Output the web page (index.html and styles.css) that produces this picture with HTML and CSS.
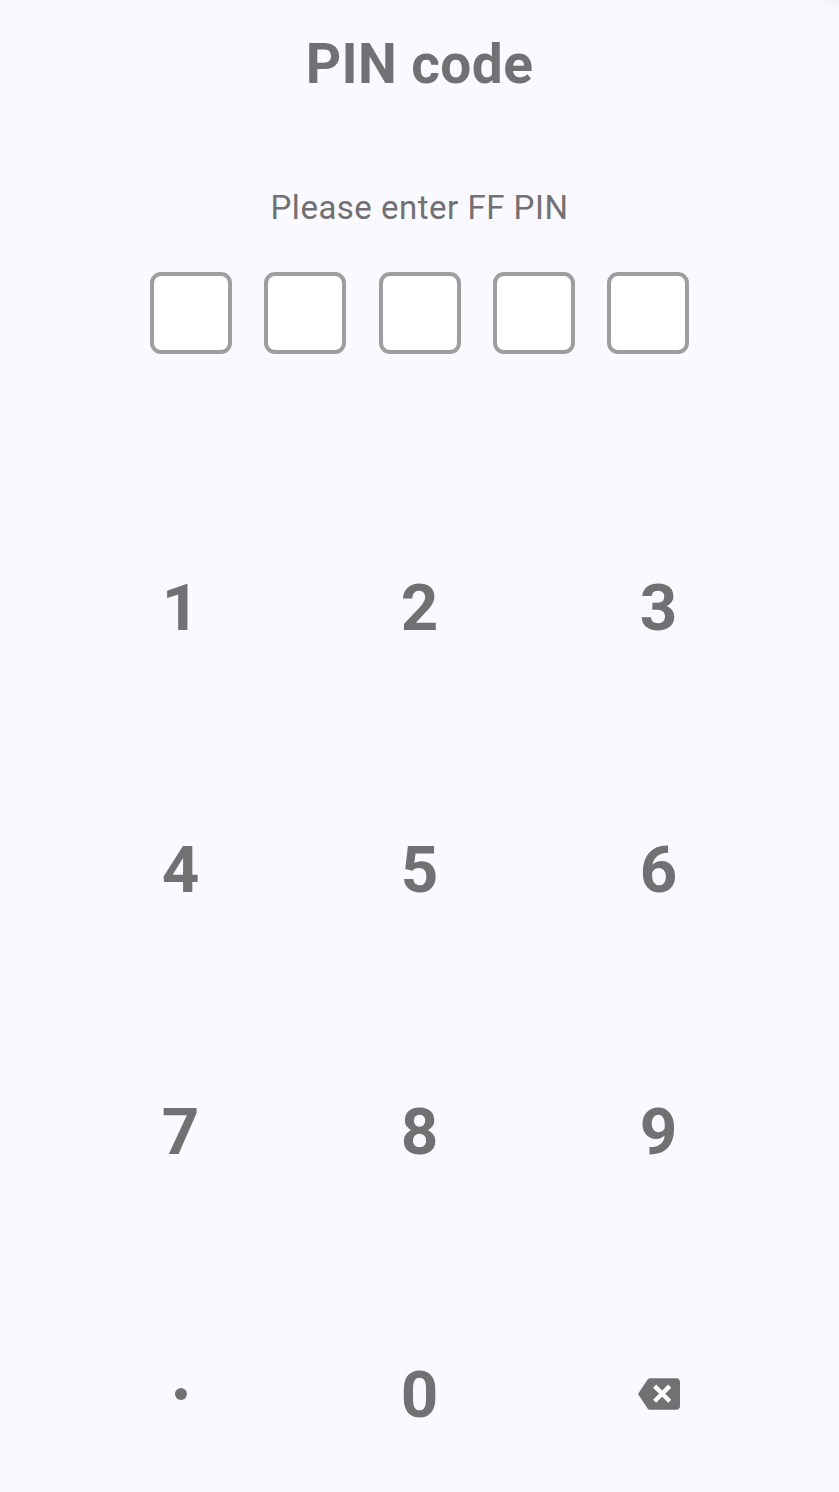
FILE: index.html
```html
<!DOCTYPE html>
<html lang="en">
<head>
  <meta charset="UTF-8" />
  <meta name="viewport" content="width=device-width, initial-scale=1.0" />
  <title>PIN code</title>
  <link rel="stylesheet" href="styles.css">
</head>
<body>
  <h1>PIN code</h1>
  <p class="hint">Please enter FF PIN</p>

  <div class="pin-row">
    <span class="pin-box"></span>
    <span class="pin-box"></span>
    <span class="pin-box"></span>
    <span class="pin-box"></span>
    <span class="pin-box"></span>
  </div>

  <div class="keypad">
    <button>1</button>
    <button>2</button>
    <button>3</button>
    <button>4</button>
    <button>5</button>
    <button>6</button>
    <button>7</button>
    <button>8</button>
    <button>9</button>
    <button aria-label="Dot"><span class="dot"></span></button>
    <button>0</button>
    <button aria-label="Delete">
      <svg class="backspace" viewBox="0 0 24 24">
        <path d="M22 3H7c-.69 0-1.23.35-1.59.88L0 12l5.41 8.11c.36.53.9.89 1.59.89h15c1.1 0 2-.9 2-2V5c0-1.1-.9-2-2-2z" />
        <path class="cross" d="M9.500 7.500l8.600 8.600M18.100 7.500l-8.600 8.600" />
      </svg>
    </button>
  </div>
</body>
</html>
```

FILE: styles.css
```css
body {
  background: radial-gradient(ellipse 20px 10px at 100% 0, #f0eff3, #faf9ff);
  color: #717073;
  font-family: Roboto, sans-serif;
  margin: 0;
  height: 1492px;
  overflow: hidden;
  text-align: center;
}

h1 {
  margin: 0;
  padding-top: 31px;
  font-size: 55px;
  line-height: 66px;
  font-weight: 700;
  letter-spacing: 0.4px;
}

.hint {
  margin: 91px 0 0;
  font-size: 33px;
  line-height: 40px;
  letter-spacing: 0.5px;
}

.pin-row {
  display: flex;
  justify-content: center;
  gap: 32.2px;
  margin-top: 44px;
}

.pin-box {
  width: 82px;
  height: 82px;
  box-sizing: border-box;
  border: 4px solid #9e9e9e;
  border-radius: 11px;
  background-color: #fff;
}

.keypad {
  display: grid;
  grid-template-columns: repeat(3, 239px);
  grid-auto-rows: 262.3px;
  justify-content: center;
  margin-top: 122px;
}

button {
  display: flex;
  align-items: center;
  justify-content: center;
  padding: 0;
  border: none;
  background: none;
  color: inherit;
  font-family: inherit;
  font-size: 65.5px;
  font-weight: 700;
  cursor: pointer;
}

.dot {
  width: 12px;
  height: 12px;
  border-radius: 50%;
  background-color: currentColor;
}

.backspace {
  width: 42px;
  height: 42px;
  fill: currentColor;
}

.cross {
  fill: none;
  stroke: #fff;
  stroke-width: 2.5;
}
```
